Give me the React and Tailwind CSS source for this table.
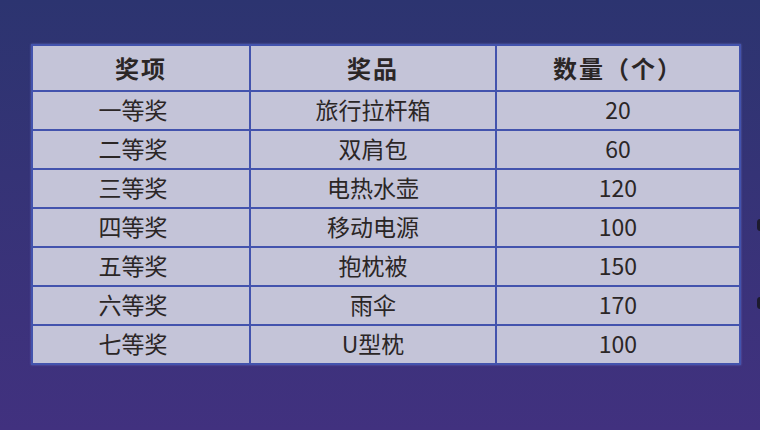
const rows = [
  ['一等奖', '旅行拉杆箱', '20'],
  ['二等奖', '双肩包', '60'],
  ['三等奖', '电热水壶', '120'],
  ['四等奖', '移动电源', '100'],
  ['五等奖', '抱枕被', '150'],
  ['六等奖', '雨伞', '170'],
  ['七等奖', 'U型枕', '100'],
];

const font = { fontFamily: '"Noto Sans CJK SC", "Noto Sans", sans-serif' };

export default function App() {
  return (
    <div
      className="relative w-[760px] h-[430px] overflow-hidden bg-gradient-to-b from-[#2c3470] to-[#41317f] pt-[44px] pl-[31px]"
      style={font}
    >
      <div className="grid grid-cols-[216px_244px_242px] gap-[2px] p-[2px] bg-[#4353ad] w-[710px] shadow-[0_0_2px_rgba(120,130,220,0.6)]">
        <div className="bg-[#c4c4d8] h-[44px] flex items-center justify-center text-[24px] tracking-[2px] font-bold text-[#2b2626]">奖项</div>
        <div className="bg-[#c4c4d8] h-[44px] flex items-center justify-center text-[24px] tracking-[2px] font-bold text-[#2b2626]">奖品</div>
        <div className="bg-[#c4c4d8] h-[44px] flex items-center justify-center text-[24px] tracking-[2px] font-bold text-[#2b2626]">数量（个）</div>
        {rows.map((r, i) =>
          r.map((c, j) => (
            <div
              key={`${i}-${j}`}
              className={`bg-[#c4c4d8] h-[37px] flex items-center justify-center pb-[3px] text-[23px] text-[#2b2626] ${j === 0 ? 'pr-[16px]' : ''}`}
            >
              {c}
            </div>
          ))
        )}
      </div>
      <div className="absolute right-[-4px] top-[219px] w-[7px] h-[12px] rounded-full bg-[#1d1b2e]" />
      <div className="absolute right-[-4px] top-[297px] w-[7px] h-[12px] rounded-full bg-[#1d1b2e]" />
    </div>
  );
}
